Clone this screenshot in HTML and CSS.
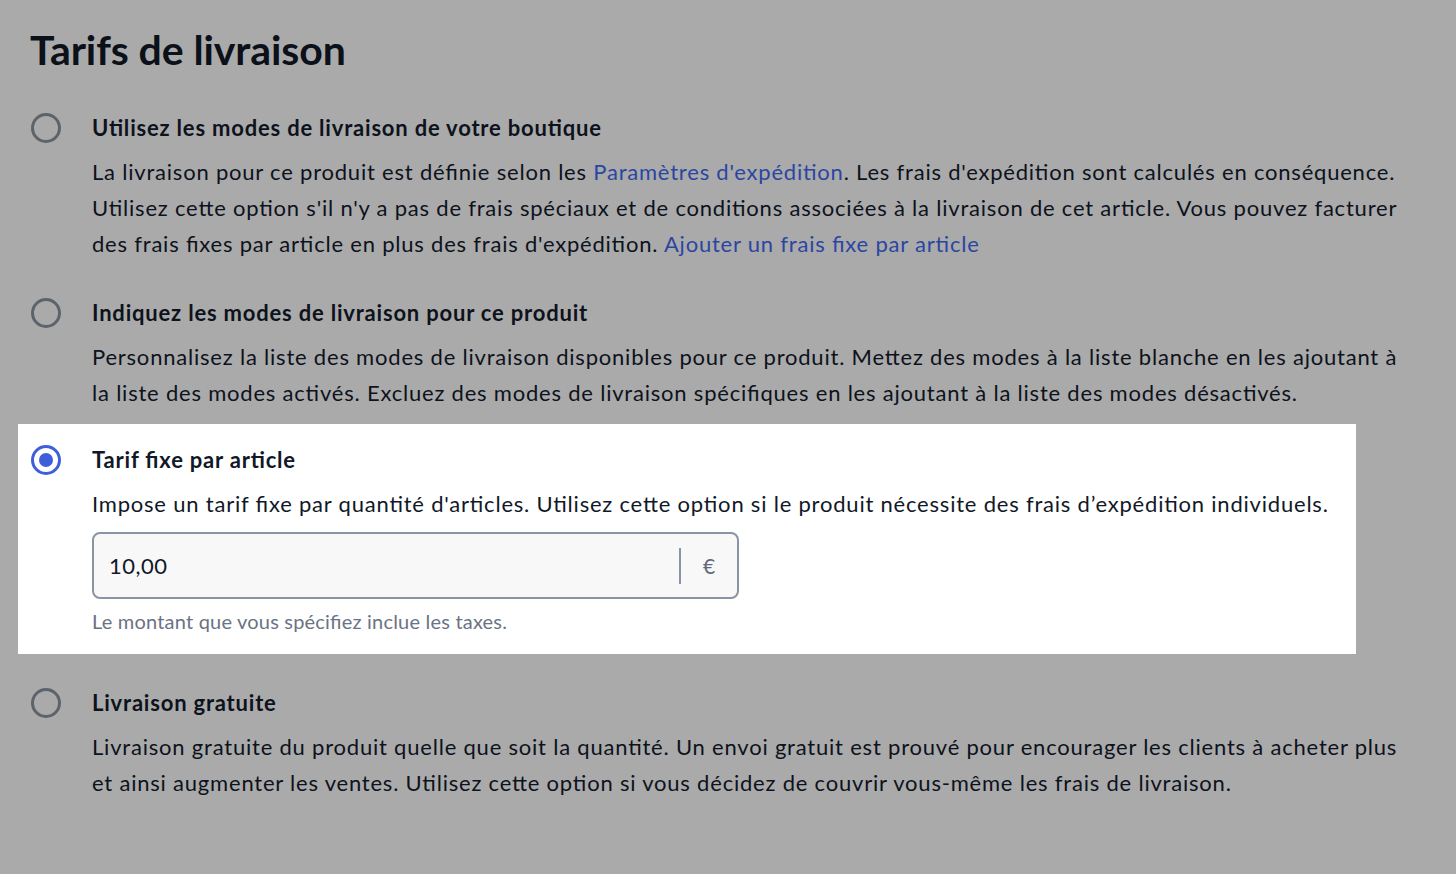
FILE: index.html
```html
<!DOCTYPE html>
<html lang="fr">
<head>
<meta charset="utf-8">
<title>Tarifs de livraison</title>
<link rel="stylesheet" href="styles.css">
</head>
<body>
<main class="page">
  <h1 class="title">Tarifs de livraison</h1>
  <div class="options">
    <div class="option">
      <span class="radio"></span>
      <div class="content">
        <div class="label">Utilisez les modes de livraison de votre boutique</div>
        <p class="desc">La livraison pour ce produit est définie selon les <a href="#">Paramètres d'expédition</a>. Les frais d'expédition sont calculés en conséquence. Utilisez cette option s'il n'y a pas de frais spéciaux et de conditions associées à la livraison de cet article. Vous pouvez facturer des frais fixes par article en plus des frais d'expédition. <a href="#">Ajouter un frais fixe par article</a></p>
      </div>
    </div>
    <div class="option">
      <span class="radio"></span>
      <div class="content">
        <div class="label">Indiquez les modes de livraison pour ce produit</div>
        <p class="desc">Personnalisez la liste des modes de livraison disponibles pour ce produit. Mettez des modes à la liste blanche en les ajoutant à la liste des modes activés. Excluez des modes de livraison spécifiques en les ajoutant à la liste des modes désactivés.</p>
      </div>
    </div>
    <div class="option option-active">
      <span class="radio radio-checked"></span>
      <div class="content">
        <div class="label">Tarif fixe par article</div>
        <p class="desc">Impose un tarif fixe par quantité d'articles. Utilisez cette option si le produit nécessite des frais d’expédition individuels.</p>
        <div class="field">
          <span class="field-value">10,00</span>
          <span class="field-suffix">€</span>
        </div>
        <p class="hint">Le montant que vous spécifiez inclue les taxes.</p>
      </div>
    </div>
    <div class="option">
      <span class="radio"></span>
      <div class="content">
        <div class="label">Livraison gratuite</div>
        <p class="desc">Livraison gratuite du produit quelle que soit la quantité. Un envoi gratuit est prouvé pour encourager les clients à acheter plus et ainsi augmenter les ventes. Utilisez cette option si vous décidez de couvrir vous-même les frais de livraison.</p>
      </div>
    </div>
  </div>
</main>
</body>
</html>
```
FILE: styles.css
```css
html, body {
  margin: 0;
  padding: 0;
  background: #aaaaaa;
}
body {
  font-family: Lato, "Noto Sans", sans-serif;
  color: #0d121c;
  width: 1456px;
  height: 874px;
  overflow: hidden;
  font-feature-settings: "liga" 1;
}
.page {
  padding: 25px 0 0 18px;
}
.title {
  margin: 0 0 0 12px;
  font-size: 41px;
  line-height: 50px;
  font-weight: 700;
  color: #0b1019;
  letter-spacing: -0.1px;
}
.options {
  display: flex;
  flex-direction: column;
  width: 1338px;
  margin-top: 16px;
}
.option {
  display: flex;
  gap: 31px;
  padding: 23px 0 14px 13px;
}
.option-active {
  background: #ffffff;
  margin-top: -1px;
  padding-top: 22px;
  padding-bottom: 21px;
  margin-bottom: 12px;
  color: #111827;
}
.radio {
  flex: none;
  box-sizing: border-box;
  width: 30px;
  height: 30px;
  border: 3px solid #5d636b;
  border-radius: 50%;
  margin-top: -1px;
  display: flex;
  align-items: center;
  justify-content: center;
}
.radio-checked {
  border-color: #3e5fdb;
}
.radio-checked::after {
  content: "";
  width: 14px;
  height: 14px;
  border-radius: 50%;
  background: #3e5fdb;
}
.content {
  width: 1312px;
  flex: none;
}
.label {
  font-size: 22px;
  line-height: 28px;
  font-weight: 700;
  letter-spacing: 0.8px;
}
.desc {
  margin: 12px 0 0;
  font-size: 22px;
  line-height: 36px;
  font-weight: 400;
  letter-spacing: 0.79px;
}
.desc a {
  color: #2b46a2;
  text-decoration: none;
}
.field {
  margin-top: 10px;
  box-sizing: border-box;
  width: 647px;
  height: 67px;
  border: 2px solid #8a94a3;
  border-radius: 8px;
  background: #f8f8f8;
  display: flex;
  align-items: center;
}
.field-value {
  flex: 1;
  padding-left: 15px;
  font-size: 22px;
  letter-spacing: 0.5px;
  color: #111827;
}
.field-suffix {
  width: 56px;
  border-left: 2px solid #8a94a3;
  height: 36px;
  display: flex;
  align-items: center;
  justify-content: center;
  font-size: 21px;
  color: #5f6b7a;
}
.hint {
  margin: 10px 0 0;
  font-size: 20px;
  line-height: 24px;
  letter-spacing: 0.2px;
  color: #6b7383;
}
```
